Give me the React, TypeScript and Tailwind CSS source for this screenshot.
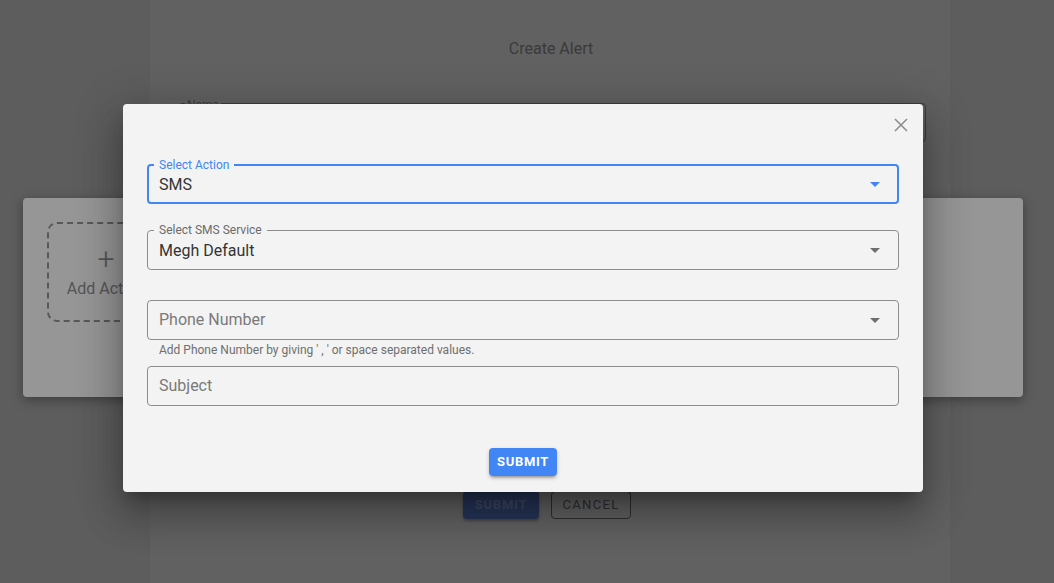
import { FC, ReactNode } from "react";

const Caret: FC<{ className?: string }> = ({ className }) => (
  <svg width="24" height="24" viewBox="0 0 24 24" className={className}>
    <path d="M7 10l5 5 5-5z" fill="currentColor" />
  </svg>
);

interface FieldProps {
  label?: string;
  value?: string;
  placeholder?: string;
  focused?: boolean;
  select?: boolean;
}

const Field: FC<FieldProps> = ({ label, value, placeholder, focused, select }) => (
  <div
    className={
      "relative h-[40px] rounded-[4px] flex items-center pr-[12px] " +
      (focused ? "border-2 border-[#4285f4] pl-[10px]" : "border border-[#8c8c8c] pl-[11px]")
    }
  >
    {label && (
      <span
        className={
          "absolute -top-[8px] px-[5px] bg-[#f3f3f3] text-[12px] leading-[14px] " +
          (focused ? "left-[5px] text-[#4285f4]" : "left-[6px] text-[#6b6b6b]")
        }
      >
        {label}
      </span>
    )}
    <span className={"flex-1 text-[16px] " + (value ? "pt-[2px] text-[#333]" : "text-[#7a7a7a]")}>
      {value || placeholder}
    </span>
    {select && (
      <Caret className={focused ? "-mr-[2px] text-[#4285f4]" : "-mr-[1px] text-[#6e6e6e]"} />
    )}
  </div>
);

const Modal: FC<{ children: ReactNode }> = ({ children }) => (
  <div className="absolute left-[123px] top-[104px] w-[800px] h-[388px] bg-[#f3f3f3] rounded-[4px] shadow-[0_11px_15px_-7px_rgba(0,0,0,0.3),0_24px_38px_3px_rgba(0,0,0,0.2),0_9px_46px_8px_rgba(0,0,0,0.16)]">
    {children}
  </div>
);

export default function App() {
  return (
    <div
      className="relative h-[583px] w-[1054px] overflow-hidden bg-[#5d5d5d]"
      style={{ fontFamily: "Roboto, 'Liberation Sans', sans-serif" }}
    >
      {/* page behind the dialog */}
      <div className="ml-[150px] w-[800px] h-full bg-[#616161] flex flex-col">
        <div className="pt-[39px] text-center text-[16px] leading-[20px] text-[#3a3a3a] pl-[2px]">
          Create Alert
        </div>
        <div className="relative mt-[44px] ml-[28px] w-[748px] h-[39px] rounded-[4px] border border-[#3c3c3c]">
          <span className="absolute -top-[8px] left-[6px] px-[2px] bg-[#616161] text-[12px] text-[#3c3c3c]">
            Name
          </span>
        </div>
        <div className="-ml-[127px] mt-[56px] w-[1000px] h-[199px] rounded-[4px] bg-[#969696] shadow-[0_3px_12px_rgba(0,0,0,0.35)] p-[24px]">
          <div className="w-[118px] h-[100px] rounded-[10px] border-2 border-dashed border-[#585858] flex flex-col items-center justify-center text-[#555]">
            <span className="text-[30px] leading-[30px] font-light">+</span>
            <span className="text-[16px] mt-[3px]">Add Action</span>
          </div>
        </div>
        <div className="mt-[94px] flex justify-center gap-[12px] pr-[6px]">
          <div className="w-[76px] h-[28px] rounded-[4px] bg-[#253457] flex items-center justify-center text-[13px] font-bold tracking-[0.06em] text-[#3d4760] shadow-[0_2px_3px_rgba(0,0,0,0.3)]">
            SUBMIT
          </div>
          <div className="w-[80px] h-[28px] rounded-[4px] border border-[#2e2e2e] flex items-center justify-center text-[13px] tracking-[0.1em] text-[#2e2e2e]">
            CANCEL
          </div>
        </div>
      </div>

      {/* dialog */}
      <Modal>
        <div className="flex justify-end pt-[14px] pr-[15px]">
          <svg width="14" height="14" viewBox="0 0 14 14" className="text-[#8a8a8a]">
            <path d="M1 1L13 13M13 1L1 13" stroke="currentColor" strokeWidth="1.5" />
          </svg>
        </div>
        <div className="px-[24px] pt-[32px] flex flex-col">
          <Field label="Select Action" value="SMS" focused select />
          <div className="mt-[26px]">
            <Field label="Select SMS Service" value="Megh Default" select />
          </div>
          <div className="mt-[30px]">
            <Field placeholder="Phone Number" select />
          </div>
          <div className="pl-[12px] pt-[3px] text-[12px] leading-[14px] text-[#6f6f6f]">
            Add Phone Number by giving ' , ' or space separated values.
          </div>
          <div className="mt-[9px]">
            <Field placeholder="Subject" />
          </div>
          <div className="mt-[42px] flex justify-center">
            <div className="w-[68px] h-[28px] rounded-[4px] bg-[#4285f4] flex items-center justify-center text-[13px] font-bold tracking-[0.05em] text-white shadow-[0_3px_3px_-2px_rgba(0,0,0,0.3),0_2px_4px_rgba(0,0,0,0.2)]">
              SUBMIT
            </div>
          </div>
        </div>
      </Modal>
    </div>
  );
}
